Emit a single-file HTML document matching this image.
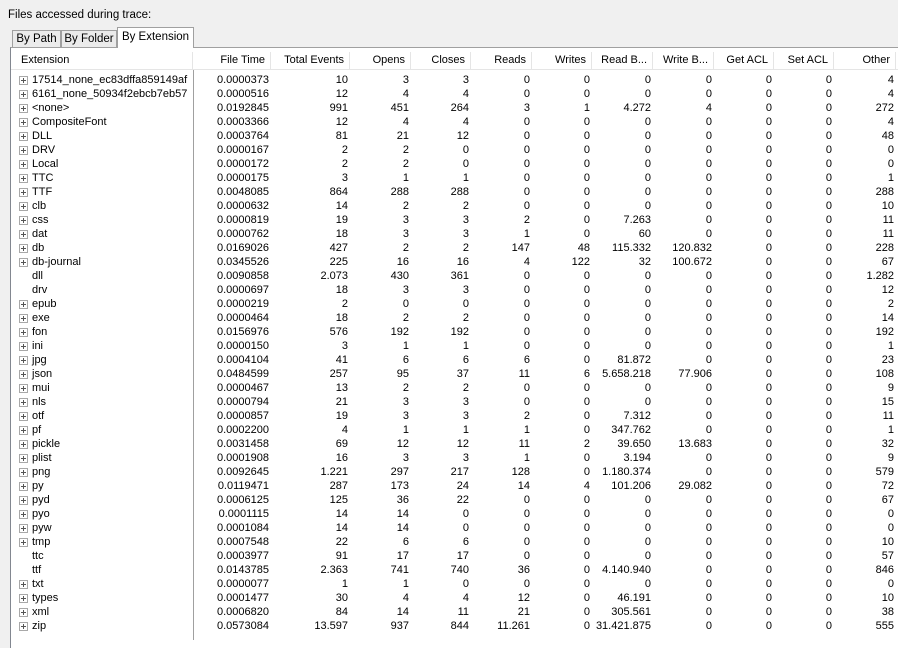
<!DOCTYPE html>
<html><head><meta charset="utf-8"><style>
html,body{margin:0;padding:0;}
body{width:898px;height:640px;background:#f0f0f0;position:relative;overflow:hidden;font-family:"Liberation Sans",sans-serif;font-size:11px;color:#000;}
.title{position:absolute;left:8px;top:9px;font-size:11.5px;}
.tab{position:absolute;top:30px;height:17px;border:1px solid #a0a0a0;border-bottom:none;background:#ebebeb;font-size:11.5px;line-height:17px;text-align:center;box-sizing:border-box;}
.tab.sel{top:27px;height:21px;background:#fff;line-height:18px;z-index:3;}
.panel{position:absolute;left:10px;top:47px;width:900px;height:600px;border-left:1px solid #828790;border-top:1px solid #a0a0a0;background:#fff;}
.hdr{position:absolute;left:11px;top:52px;height:17px;width:890px;border-bottom:1px solid #e5e5e5;}
.h{position:absolute;top:0;height:17px;line-height:17px;text-align:right;border-right:1px solid #e5e5e5;box-sizing:border-box;padding-right:5px;white-space:nowrap;}
.vsep{position:absolute;left:193px;top:70px;width:1px;height:570px;background:#a0a0a0;}
table{position:absolute;left:11px;top:73px;border-collapse:collapse;table-layout:fixed;}
td{height:14px;line-height:14px;padding:0 2px 0 0;text-align:right;white-space:nowrap;overflow:hidden;}
td.e{text-align:left;padding-left:21px;position:relative;}
td.e.p::before{content:"";position:absolute;left:8px;top:3px;width:7px;height:7px;border:1px solid #a8a8a8;background:
linear-gradient(#555,#555) center/5px 1px no-repeat,
linear-gradient(#555,#555) center/1px 5px no-repeat,#fff;}
</style></head><body>
<div class="title">Files accessed during trace:</div>
<div class="panel"></div>
<div class="tab" style="left:12px;width:49px;">By Path</div>
<div class="tab" style="left:61px;width:56px;">By Folder</div>
<div class="tab sel" style="left:117px;width:77px;">By Extension</div>
<div class="hdr">
<div class="h" style="left:0;width:182px;text-align:left;padding-left:10px;">Extension</div>
<div class="h" style="left:182px;width:78px;">File Time</div>
<div class="h" style="left:260px;width:79px;">Total Events</div>
<div class="h" style="left:339px;width:61px;">Opens</div>
<div class="h" style="left:400px;width:60px;">Closes</div>
<div class="h" style="left:460px;width:61px;">Reads</div>
<div class="h" style="left:521px;width:60px;">Writes</div>
<div class="h" style="left:581px;width:61px;">Read B...</div>
<div class="h" style="left:642px;width:61px;">Write B...</div>
<div class="h" style="left:703px;width:60px;">Get ACL</div>
<div class="h" style="left:763px;width:60px;">Set ACL</div>
<div class="h" style="left:823px;width:62px;">Other</div>
</div>
<div class="vsep"></div>
<table>
<colgroup><col style="width:182px"><col style="width:78px"><col style="width:79px"><col style="width:61px"><col style="width:60px"><col style="width:61px"><col style="width:60px"><col style="width:61px"><col style="width:61px"><col style="width:60px"><col style="width:60px"><col style="width:62px"></colgroup>
<tr><td class="e p">17514_none_ec83dffa859149af</td><td>0.0000373</td><td>10</td><td>3</td><td>3</td><td>0</td><td>0</td><td>0</td><td>0</td><td>0</td><td>0</td><td>4</td></tr>
<tr><td class="e p">6161_none_50934f2ebcb7eb57</td><td>0.0000516</td><td>12</td><td>4</td><td>4</td><td>0</td><td>0</td><td>0</td><td>0</td><td>0</td><td>0</td><td>4</td></tr>
<tr><td class="e p">&lt;none&gt;</td><td>0.0192845</td><td>991</td><td>451</td><td>264</td><td>3</td><td>1</td><td>4.272</td><td>4</td><td>0</td><td>0</td><td>272</td></tr>
<tr><td class="e p">CompositeFont</td><td>0.0003366</td><td>12</td><td>4</td><td>4</td><td>0</td><td>0</td><td>0</td><td>0</td><td>0</td><td>0</td><td>4</td></tr>
<tr><td class="e p">DLL</td><td>0.0003764</td><td>81</td><td>21</td><td>12</td><td>0</td><td>0</td><td>0</td><td>0</td><td>0</td><td>0</td><td>48</td></tr>
<tr><td class="e p">DRV</td><td>0.0000167</td><td>2</td><td>2</td><td>0</td><td>0</td><td>0</td><td>0</td><td>0</td><td>0</td><td>0</td><td>0</td></tr>
<tr><td class="e p">Local</td><td>0.0000172</td><td>2</td><td>2</td><td>0</td><td>0</td><td>0</td><td>0</td><td>0</td><td>0</td><td>0</td><td>0</td></tr>
<tr><td class="e p">TTC</td><td>0.0000175</td><td>3</td><td>1</td><td>1</td><td>0</td><td>0</td><td>0</td><td>0</td><td>0</td><td>0</td><td>1</td></tr>
<tr><td class="e p">TTF</td><td>0.0048085</td><td>864</td><td>288</td><td>288</td><td>0</td><td>0</td><td>0</td><td>0</td><td>0</td><td>0</td><td>288</td></tr>
<tr><td class="e p">clb</td><td>0.0000632</td><td>14</td><td>2</td><td>2</td><td>0</td><td>0</td><td>0</td><td>0</td><td>0</td><td>0</td><td>10</td></tr>
<tr><td class="e p">css</td><td>0.0000819</td><td>19</td><td>3</td><td>3</td><td>2</td><td>0</td><td>7.263</td><td>0</td><td>0</td><td>0</td><td>11</td></tr>
<tr><td class="e p">dat</td><td>0.0000762</td><td>18</td><td>3</td><td>3</td><td>1</td><td>0</td><td>60</td><td>0</td><td>0</td><td>0</td><td>11</td></tr>
<tr><td class="e p">db</td><td>0.0169026</td><td>427</td><td>2</td><td>2</td><td>147</td><td>48</td><td>115.332</td><td>120.832</td><td>0</td><td>0</td><td>228</td></tr>
<tr><td class="e p">db-journal</td><td>0.0345526</td><td>225</td><td>16</td><td>16</td><td>4</td><td>122</td><td>32</td><td>100.672</td><td>0</td><td>0</td><td>67</td></tr>
<tr><td class="e">dll</td><td>0.0090858</td><td>2.073</td><td>430</td><td>361</td><td>0</td><td>0</td><td>0</td><td>0</td><td>0</td><td>0</td><td>1.282</td></tr>
<tr><td class="e">drv</td><td>0.0000697</td><td>18</td><td>3</td><td>3</td><td>0</td><td>0</td><td>0</td><td>0</td><td>0</td><td>0</td><td>12</td></tr>
<tr><td class="e p">epub</td><td>0.0000219</td><td>2</td><td>0</td><td>0</td><td>0</td><td>0</td><td>0</td><td>0</td><td>0</td><td>0</td><td>2</td></tr>
<tr><td class="e p">exe</td><td>0.0000464</td><td>18</td><td>2</td><td>2</td><td>0</td><td>0</td><td>0</td><td>0</td><td>0</td><td>0</td><td>14</td></tr>
<tr><td class="e p">fon</td><td>0.0156976</td><td>576</td><td>192</td><td>192</td><td>0</td><td>0</td><td>0</td><td>0</td><td>0</td><td>0</td><td>192</td></tr>
<tr><td class="e p">ini</td><td>0.0000150</td><td>3</td><td>1</td><td>1</td><td>0</td><td>0</td><td>0</td><td>0</td><td>0</td><td>0</td><td>1</td></tr>
<tr><td class="e p">jpg</td><td>0.0004104</td><td>41</td><td>6</td><td>6</td><td>6</td><td>0</td><td>81.872</td><td>0</td><td>0</td><td>0</td><td>23</td></tr>
<tr><td class="e p">json</td><td>0.0484599</td><td>257</td><td>95</td><td>37</td><td>11</td><td>6</td><td>5.658.218</td><td>77.906</td><td>0</td><td>0</td><td>108</td></tr>
<tr><td class="e p">mui</td><td>0.0000467</td><td>13</td><td>2</td><td>2</td><td>0</td><td>0</td><td>0</td><td>0</td><td>0</td><td>0</td><td>9</td></tr>
<tr><td class="e p">nls</td><td>0.0000794</td><td>21</td><td>3</td><td>3</td><td>0</td><td>0</td><td>0</td><td>0</td><td>0</td><td>0</td><td>15</td></tr>
<tr><td class="e p">otf</td><td>0.0000857</td><td>19</td><td>3</td><td>3</td><td>2</td><td>0</td><td>7.312</td><td>0</td><td>0</td><td>0</td><td>11</td></tr>
<tr><td class="e p">pf</td><td>0.0002200</td><td>4</td><td>1</td><td>1</td><td>1</td><td>0</td><td>347.762</td><td>0</td><td>0</td><td>0</td><td>1</td></tr>
<tr><td class="e p">pickle</td><td>0.0031458</td><td>69</td><td>12</td><td>12</td><td>11</td><td>2</td><td>39.650</td><td>13.683</td><td>0</td><td>0</td><td>32</td></tr>
<tr><td class="e p">plist</td><td>0.0001908</td><td>16</td><td>3</td><td>3</td><td>1</td><td>0</td><td>3.194</td><td>0</td><td>0</td><td>0</td><td>9</td></tr>
<tr><td class="e p">png</td><td>0.0092645</td><td>1.221</td><td>297</td><td>217</td><td>128</td><td>0</td><td>1.180.374</td><td>0</td><td>0</td><td>0</td><td>579</td></tr>
<tr><td class="e p">py</td><td>0.0119471</td><td>287</td><td>173</td><td>24</td><td>14</td><td>4</td><td>101.206</td><td>29.082</td><td>0</td><td>0</td><td>72</td></tr>
<tr><td class="e p">pyd</td><td>0.0006125</td><td>125</td><td>36</td><td>22</td><td>0</td><td>0</td><td>0</td><td>0</td><td>0</td><td>0</td><td>67</td></tr>
<tr><td class="e p">pyo</td><td>0.0001115</td><td>14</td><td>14</td><td>0</td><td>0</td><td>0</td><td>0</td><td>0</td><td>0</td><td>0</td><td>0</td></tr>
<tr><td class="e p">pyw</td><td>0.0001084</td><td>14</td><td>14</td><td>0</td><td>0</td><td>0</td><td>0</td><td>0</td><td>0</td><td>0</td><td>0</td></tr>
<tr><td class="e p">tmp</td><td>0.0007548</td><td>22</td><td>6</td><td>6</td><td>0</td><td>0</td><td>0</td><td>0</td><td>0</td><td>0</td><td>10</td></tr>
<tr><td class="e">ttc</td><td>0.0003977</td><td>91</td><td>17</td><td>17</td><td>0</td><td>0</td><td>0</td><td>0</td><td>0</td><td>0</td><td>57</td></tr>
<tr><td class="e">ttf</td><td>0.0143785</td><td>2.363</td><td>741</td><td>740</td><td>36</td><td>0</td><td>4.140.940</td><td>0</td><td>0</td><td>0</td><td>846</td></tr>
<tr><td class="e p">txt</td><td>0.0000077</td><td>1</td><td>1</td><td>0</td><td>0</td><td>0</td><td>0</td><td>0</td><td>0</td><td>0</td><td>0</td></tr>
<tr><td class="e p">types</td><td>0.0001477</td><td>30</td><td>4</td><td>4</td><td>12</td><td>0</td><td>46.191</td><td>0</td><td>0</td><td>0</td><td>10</td></tr>
<tr><td class="e p">xml</td><td>0.0006820</td><td>84</td><td>14</td><td>11</td><td>21</td><td>0</td><td>305.561</td><td>0</td><td>0</td><td>0</td><td>38</td></tr>
<tr><td class="e p">zip</td><td>0.0573084</td><td>13.597</td><td>937</td><td>844</td><td>11.261</td><td>0</td><td>31.421.875</td><td>0</td><td>0</td><td>0</td><td>555</td></tr>
</table>
</body></html>
